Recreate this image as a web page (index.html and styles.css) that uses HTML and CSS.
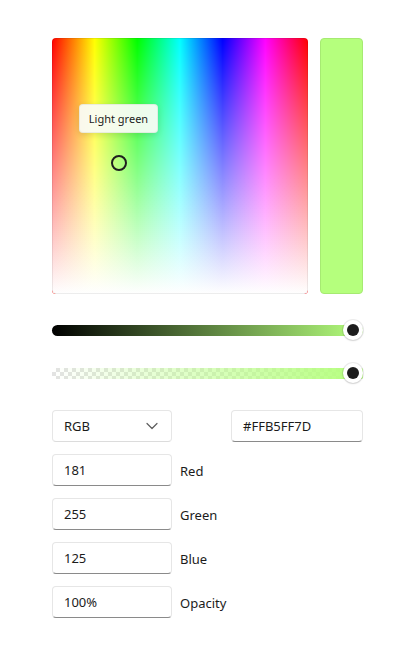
FILE: index.html
```html
<!DOCTYPE html>
<html>
<head>
<meta charset="utf-8">
<link rel="stylesheet" href="styles.css">
</head>
<body>
<div class="picker">
  <div class="top">
    <div class="spectrum">
      <div class="spectrum-white"></div>
      <div class="tooltip">Light green</div>
      <div class="marker"></div>
    </div>
    <div class="preview"></div>
  </div>
  <div class="slider">
    <div class="track track-value"></div>
    <div class="thumb"><span></span></div>
  </div>
  <div class="slider slider-alpha">
    <div class="track track-alpha"><div class="alpha-fill"></div></div>
    <div class="thumb"><span></span></div>
  </div>
  <div class="fields">
    <div class="row row-top">
      <div class="box combo">RGB
        <svg class="chev" width="12" height="8" viewBox="0 0 12 8"><path d="M1 1.5 L6 6.5 L11 1.5" fill="none" stroke="#5d5d5d" stroke-width="1.2" stroke-linecap="round" stroke-linejoin="round"/></svg>
      </div>
      <div class="box hex">#FFB5FF7D</div>
    </div>
    <div class="row"><div class="box">181</div><span class="label">Red</span></div>
    <div class="row"><div class="box">255</div><span class="label">Green</span></div>
    <div class="row"><div class="box">125</div><span class="label">Blue</span></div>
    <div class="row"><div class="box">100%</div><span class="label">Opacity</span></div>
  </div>
</div>
</body>
</html>
```
FILE: styles.css
```css
html, body {
  margin: 0;
  padding: 0;
  background: #ffffff;
}
body {
  font-family: "Noto Sans", "Open Sans", sans-serif;
  font-size: 13px;
  color: #1b1b1b;
}
.picker {
  width: 311px;
  padding: 38px 0 0 52px;
}
.top {
  display: flex;
  gap: 12px;
}
.spectrum {
  position: relative;
  width: 256px;
  height: 256px;
  border-radius: 4px;
  overflow: hidden;
  background: linear-gradient(to right, #ff0000 0%, #ffff00 16.67%, #00ff00 33.33%, #00ffff 50%, #0000ff 66.67%, #ff00ff 83.33%, #ff0000 100%);
}
.spectrum-white {
  position: absolute;
  inset: 0;
  border-radius: 4px;
  border: 1px solid rgba(0,0,0,0.07);
  background: linear-gradient(to bottom, rgba(255,255,255,0) 0%, rgba(255,255,255,1) 100%);
  background-origin: border-box;
}
.tooltip {
  position: absolute;
  left: 27px;
  top: 66px;
  width: 79px;
  height: 29px;
  box-sizing: border-box;
  border: 1px solid rgba(0,0,0,0.06);
  border-radius: 4px;
  background: rgba(250,252,247,0.93);
  box-shadow: 0 2px 6px rgba(0,0,0,0.12);
  font-size: 11px;
  line-height: 27px;
  text-align: center;
  color: #1b1b1b;
}
.marker {
  position: absolute;
  left: 59px;
  top: 117px;
  width: 12px;
  height: 12px;
  border: 2px solid #1f1f1f;
  border-radius: 50%;
}
.preview {
  width: 43px;
  height: 256px;
  box-sizing: border-box;
  border-radius: 4px;
  background: #b5ff7d;
  border: 1px solid #a6ea72;
}
.slider {
  position: relative;
  height: 20px;
  margin-top: 26px;
  display: flex;
  align-items: center;
}
.slider-alpha {
  margin-top: 23px;
}
.track {
  width: 311px;
  height: 11px;
  border-radius: 6px;
}
.track-value {
  background: linear-gradient(to right, #000000, #b5ff7d);
}
.track-alpha {
  position: relative;
  border-radius: 2px;
  overflow: hidden;
  background: repeating-conic-gradient(#e3e3e3 0 25%, #ffffff 0 50%) 0 0 / 8px 8px;
}
.alpha-fill {
  position: absolute;
  inset: 0;
  background: linear-gradient(to right, rgba(181,255,125,0), #b5ff7d);
}
.thumb {
  position: absolute;
  right: 0;
  top: 0;
  width: 20px;
  height: 20px;
  border-radius: 50%;
  background: #ffffff;
  box-shadow: 0 0 0 1px rgba(0,0,0,0.08), 0 1px 2px rgba(0,0,0,0.12);
  display: flex;
  align-items: center;
  justify-content: center;
}
.thumb span {
  width: 12px;
  height: 12px;
  border-radius: 50%;
  background: #1c1c1c;
}
.fields {
  margin-top: 27px;
  display: flex;
  flex-direction: column;
  gap: 12px;
}
.row {
  display: flex;
  align-items: center;
  height: 32px;
}
.row-top {
  justify-content: space-between;
}
.box {
  width: 120px;
  height: 32px;
  box-sizing: border-box;
  border: 1px solid #e6e6e6;
  border-bottom: 1px solid #8a8a8a;
  border-radius: 4px;
  background: #ffffff;
  padding-left: 11px;
  line-height: 29px;
  display: flex;
  align-items: center;
}
.combo {
  border-bottom-color: #dcdcdc;
  justify-content: space-between;
  padding-right: 13px;
}
.chev {
  display: block;
}
.hex {
  width: 132px;
}
.label {
  margin-left: 8px;
  padding-top: 1px;
}
```
